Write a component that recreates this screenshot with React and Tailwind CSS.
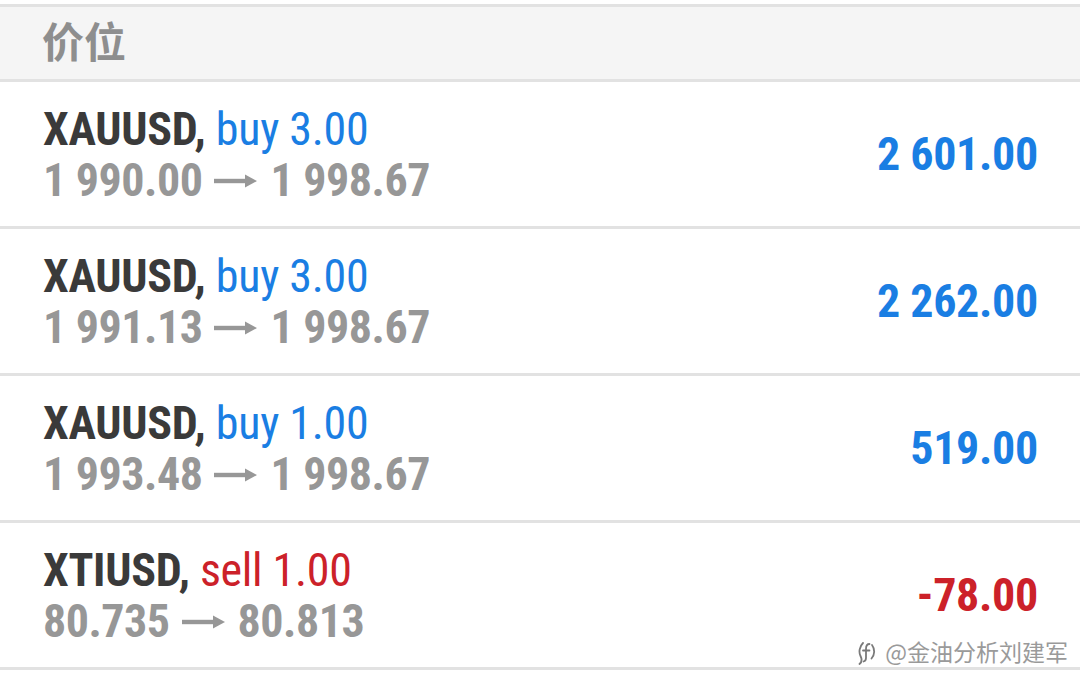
import React from "react";

const rows = [
  { sym: "XAUUSD,", side: "buy 3.00", buy: true, from: "1 990.00", to: "1 998.67", pl: "2 601.00" },
  { sym: "XAUUSD,", side: "buy 3.00", buy: true, from: "1 991.13", to: "1 998.67", pl: "2 262.00" },
  { sym: "XAUUSD,", side: "buy 1.00", buy: true, from: "1 993.48", to: "1 998.67", pl: "519.00" },
  { sym: "XTIUSD,", side: "sell 1.00", buy: false, from: "80.735", to: "80.813", pl: "-78.00" },
];

function Arrow() {
  return (
    <svg width="44" height="16" viewBox="0 0 44 16" className="inline-block mx-[12px] align-middle relative top-[-3px]" fill="#979797">
      <rect x="0" y="5.8" width="33" height="4.4" />
      <path d="M31 1.5 L43 8 L31 14.5 Z" />
    </svg>
  );
}

export default function App() {
  return (
    <div className="w-[1080px] h-[693px] bg-white overflow-hidden relative" style={{ fontFamily: "Roboto, 'Noto Sans CJK SC', sans-serif" }}>
      <div className="h-[4px]" />
      <div className="border-y-[3px] border-[#e2e2e2] bg-[#f5f5f5] h-[78px] flex items-center pl-[42px] pb-[7px]">
        <span className="text-[42px] font-bold text-[#8e8e8e] leading-none" style={{ fontFamily: "'Noto Sans CJK SC', sans-serif" }}>价位</span>
      </div>
      {rows.map((r, i) => (
        <div key={i} className="h-[147px] border-b-[3px] border-[#e2e2e2] flex items-center justify-between pl-[43px] pr-[42px] font-stretch-condensed">
          <div className="flex flex-col pt-[2px]">
            <div className="text-[46px] leading-[51px] tracking-[-0.3px]">
              <span className="font-bold text-[#3a3a3a]">{r.sym}</span>{" "}
              <span className={r.buy ? "text-[#1a7ee3]" : "text-[#cc2129]"}>{r.side}</span>
            </div>
            <div className="text-[46px] leading-[51px] font-bold text-[#979797] tracking-[-0.5px] whitespace-nowrap">
              {r.from}<Arrow />{r.to}
            </div>
          </div>
          <div className={"text-[46px] font-bold leading-none tracking-[-0.3px] " + (r.buy ? "text-[#1a7ee3]" : "text-[#cc2129]")}>{r.pl}</div>
        </div>
      ))}
      <div className="absolute right-[12px] top-[634px] flex items-center gap-[8px] text-[23px] text-[#9a9a9a]" style={{ fontFamily: "'Noto Sans CJK SC', sans-serif" }}>
        <svg width="20" height="28" viewBox="0 0 20 28" fill="none" stroke="#7a7a7a" strokeWidth="1.8" strokeLinecap="round">
          <path d="M6 6 C2.5 9.5 1.5 15 3.5 19 C5 22 5 25 2.5 27" />
          <path d="M12.5 7 C9.5 7 9 9 9 12 V21 C9 23 8.5 24 6.5 24.5" />
          <path d="M6 13.5 H12.5" />
          <path d="M15 8 C18 12 18 17.5 14.5 21.5" />
        </svg>
        <span>@金油分析刘建军</span>
      </div>
    </div>
  );
}
